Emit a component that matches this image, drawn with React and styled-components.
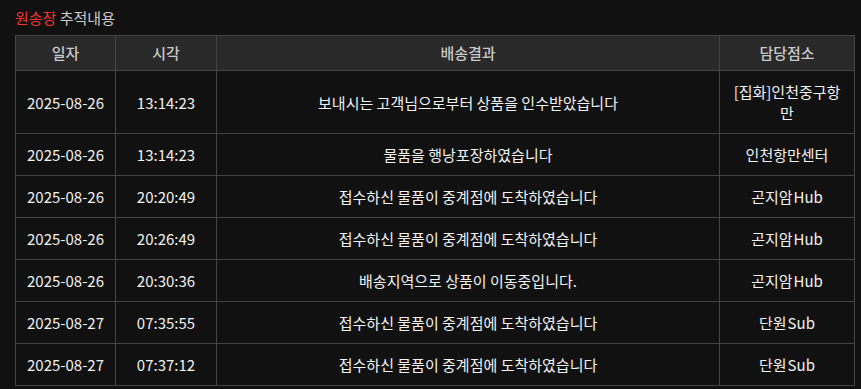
import React from "react";
import styled, { createGlobalStyle } from "styled-components";

const GlobalStyle = createGlobalStyle`
  html, body {
    margin: 0;
    padding: 0;
    background: #111111;
  }
  body {
    font-family: "Noto Sans CJK KR", "Noto Sans", sans-serif;
    color: #eeeeee;
  }
`;

const Page = styled.div`
  padding: 7px 7px 0 15px;
`;

const Heading = styled.h3`
  margin: 0 0 6px;
  font-size: 15px;
  font-weight: 400;
  line-height: 22px;
  color: #cccccc;
`;

const Accent = styled.span`
  color: #f2362f;
`;

const Table = styled.table`
  width: 839px;
  border-collapse: collapse;
  table-layout: fixed;
  font-size: 15px;
`;

const Col = styled.col`
  width: ${(p) => p.$w}px;
`;

const HeadCell = styled.th`
  padding: 6px 10px 7px;
  line-height: 21px;
  font-weight: 500;
  color: #c8c8c8;
  background: #292929;
  border: 1px solid #444444;
  text-align: center;
`;

const Cell = styled.td`
  padding: 10px;
  line-height: 21px;
  color: #f2f2f2;
  border: 1px solid #444444;
  text-align: center;
  word-break: break-all;
`;

const columns = [
  { label: "일자", w: 100 },
  { label: "시각", w: 101 },
  { label: "배송결과", w: 503 },
  { label: "담당점소", w: 135 },
];

const rows = [
  ["2025-08-26", "13:14:23", "보내시는 고객님으로부터 상품을 인수받았습니다", "[집화]인천중구항만"],
  ["2025-08-26", "13:14:23", "물품을 행낭포장하였습니다", "인천항만센터"],
  ["2025-08-26", "20:20:49", "접수하신 물품이 중계점에 도착하였습니다", "곤지암\u200AHub"],
  ["2025-08-26", "20:26:49", "접수하신 물품이 중계점에 도착하였습니다", "곤지암\u200AHub"],
  ["2025-08-26", "20:30:36", "배송지역으로 상품이 이동중입니다.", "곤지암\u200AHub"],
  ["2025-08-27", "07:35:55", "접수하신 물품이 중계점에 도착하였습니다", "단원\u200ASub"],
  ["2025-08-27", "07:37:12", "접수하신 물품이 중계점에 도착하였습니다", "단원\u200ASub"],
];

export default function App() {
  return (
    <>
      <GlobalStyle />
      <Page>
        <Heading>
          <Accent>원송장</Accent> 추적내용
        </Heading>
        <Table>
          <colgroup>
            {columns.map((c) => (
              <Col key={c.label} $w={c.w} />
            ))}
          </colgroup>
          <thead>
            <tr>
              {columns.map((c) => (
                <HeadCell key={c.label}>{c.label}</HeadCell>
              ))}
            </tr>
          </thead>
          <tbody>
            {rows.map((r, i) => (
              <tr key={i}>
                {r.map((v, j) => (
                  <Cell key={j}>{v}</Cell>
                ))}
              </tr>
            ))}
          </tbody>
        </Table>
      </Page>
    </>
  );
}
